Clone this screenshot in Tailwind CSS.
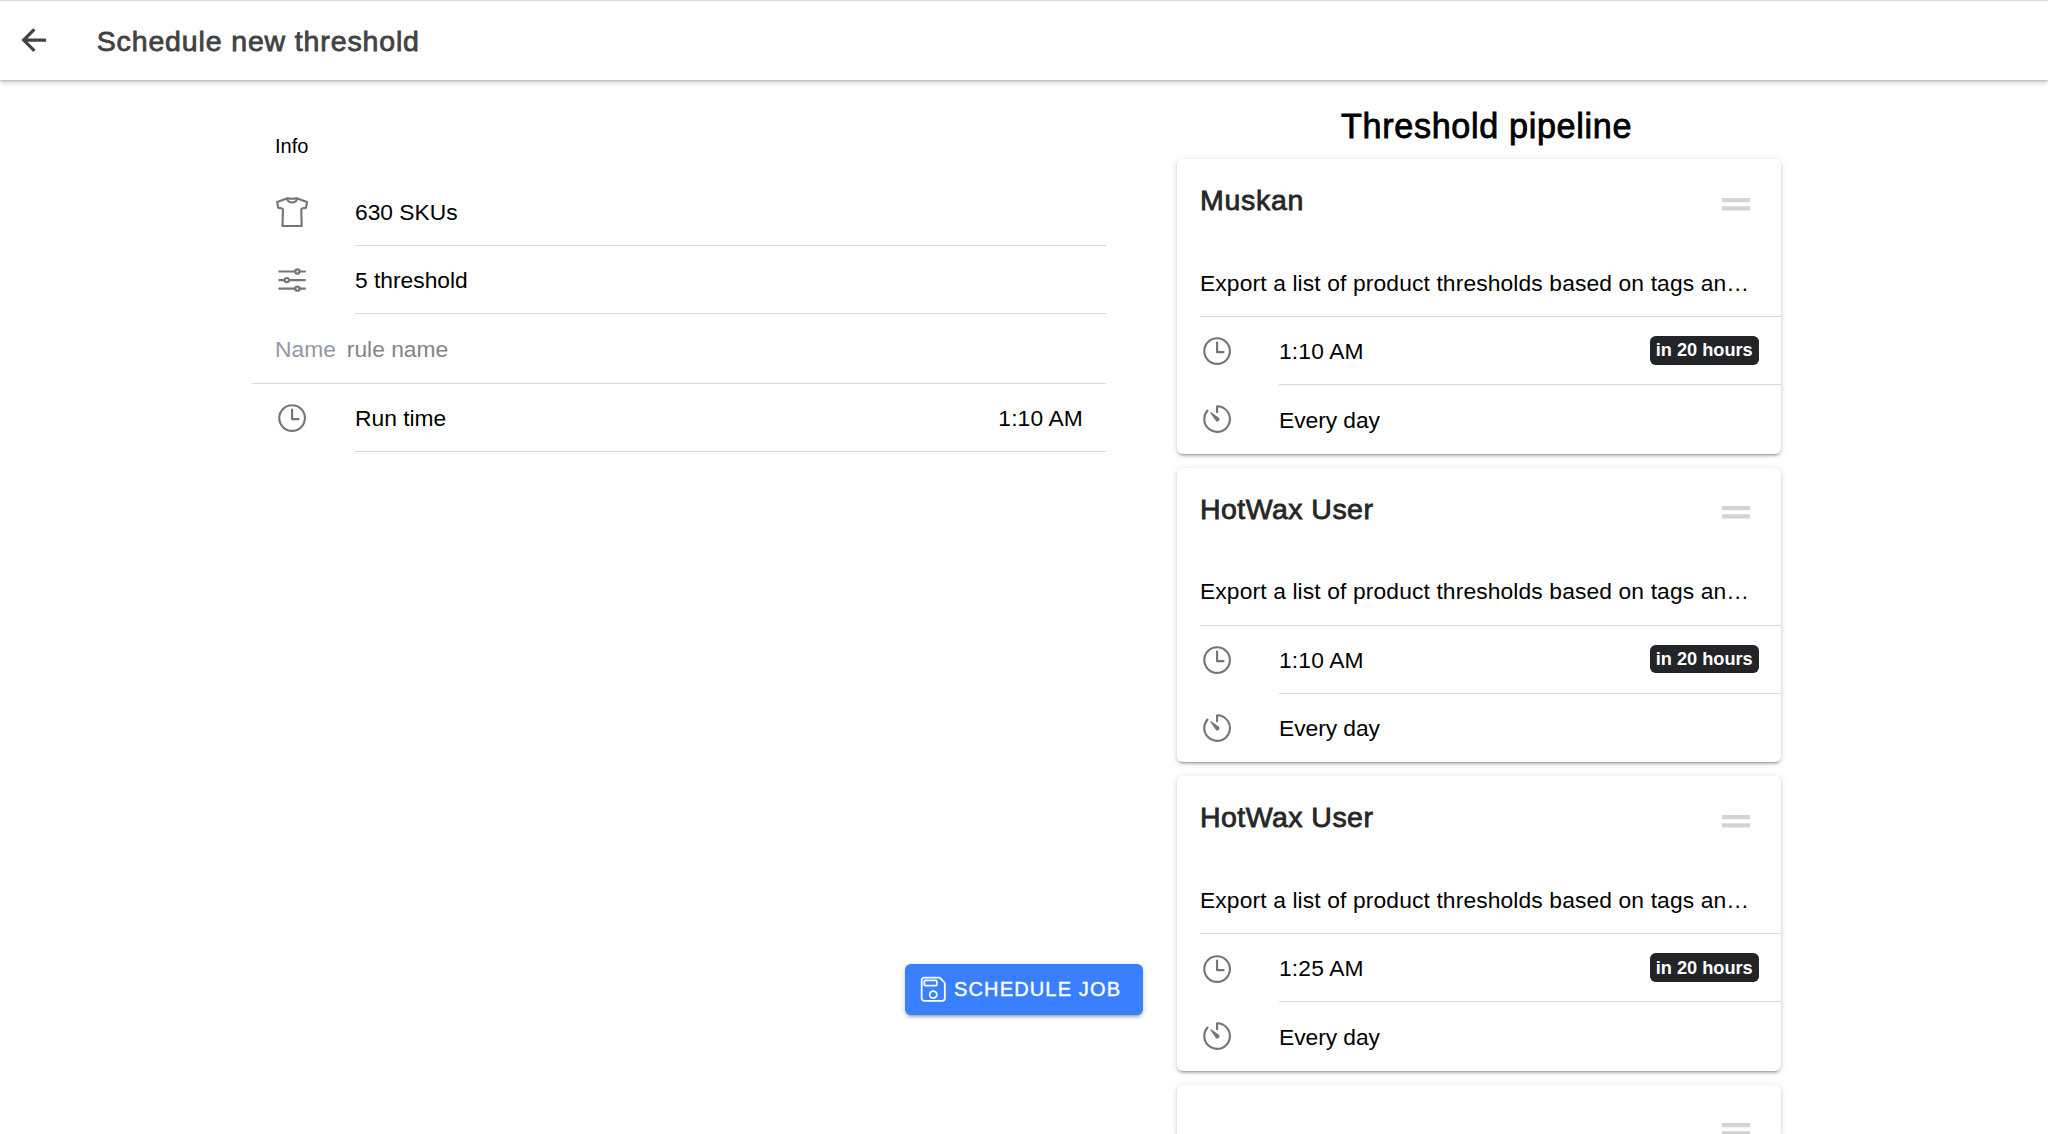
<!DOCTYPE html>
<html lang="en">
<head>
<meta charset="utf-8">
<title>Schedule new threshold</title>
<script src="https://cdn.jsdelivr.net/npm/@tailwindcss/browser@4"></script>
</head>
<body class="h-[1134px] w-[2048px] overflow-hidden bg-white font-['Liberation_Sans',Arial,sans-serif] text-[22.8px] leading-none text-black">
<svg class="hidden">
  <symbol id="time" viewBox="0 0 512 512"><path d="M256 64C150 64 64 150 64 256s86 192 192 192 192-86 192-192S362 64 256 64z" fill="none" stroke="currentColor" stroke-width="32"/><path d="M256 128v144h96" fill="none" stroke="currentColor" stroke-width="32" stroke-linecap="round" stroke-linejoin="round"/></symbol>
  <symbol id="timer" viewBox="0 0 512 512"><path d="M112.91 128A191.85 191.85 0 0064 254c-1.18 106.35 85.65 193.8 192 194 106.2.2 192-85.83 192-192 0-104.54-83.55-189.61-187.5-192a4.36 4.36 0 00-4.5 4.37V152" fill="none" stroke="currentColor" stroke-width="32" stroke-linecap="round" stroke-linejoin="round"/><path d="M233.38 278.63l-79-113a8.13 8.13 0 0111.32-11.32l113 79a32.5 32.5 0 01-37.25 53.26 33.21 33.21 0 01-8.07-7.94z" fill="currentColor"/></symbol>
  <symbol id="shirt" viewBox="0 0 512 512"><g fill="none" stroke="currentColor" stroke-width="32" stroke-linecap="round" stroke-linejoin="round"><path d="M314.56 48s-22.78 8-58.56 8-58.56-8-58.56-8a31.94 31.94 0 00-10.57 1.8L32 104l16.63 88 48.88 5.52a24 24 0 0121.29 24.58L112 464h288l-6.8-241.9a24 24 0 0121.29-24.58l48.88-5.52L480 104 325.13 49.8a31.94 31.94 0 00-10.57-1.8z"/><path d="M333.31 52.66a80 80 0 01-154.62 0"/></g></symbol>
  <symbol id="options" viewBox="0 0 512 512"><g fill="none" stroke="currentColor" stroke-width="32" stroke-linecap="round" stroke-linejoin="round"><path d="M368 128h80M64 128h240M368 384h80M64 384h240M208 256h240M64 256h80"/><circle cx="336" cy="128" r="32"/><circle cx="176" cy="256" r="32"/><circle cx="336" cy="384" r="32"/></g></symbol>
  <symbol id="save" viewBox="0 0 512 512"><path d="M380.93 57.37A32 32 0 00358.3 48H94.22A46.21 46.21 0 0048 94.22v323.56A46.21 46.21 0 0094.22 464h323.56A46.36 46.36 0 00464 417.78V153.7a32 32 0 00-9.37-22.63zM256 416a64 64 0 1164-64 63.92 63.92 0 01-64 64zm48-224H112a16 16 0 01-16-16v-64a16 16 0 0116-16h192a16 16 0 0116 16v64a16 16 0 01-16 16z" fill="none" stroke="currentColor" stroke-width="32" stroke-linecap="round" stroke-linejoin="round"/></symbol>
  <symbol id="back" viewBox="0 0 512 512"><path d="M244 400L100 256l144-144M120 256h292" fill="none" stroke="currentColor" stroke-width="48" stroke-linecap="square" stroke-miterlimit="10"/></symbol>
  <symbol id="reorder" viewBox="0 0 28 13"><path d="M0 0h28v4.2H0zM0 8.3h28v4.2H0z" fill="currentColor"/></symbol>
</svg>

<header class="flex h-[80px] items-center border-t border-[#d6d6d6] bg-white pl-[17px] text-[#424242] shadow-[0_3px_6px_rgba(0,0,0,0.14),0_1px_2px_rgba(0,0,0,0.22)]">
  <svg class="size-[34.2px]"><use href="#back"/></svg>
  <h1 class="ml-[45.5px] pt-px text-[28.5px] tracking-[0.86px] [-webkit-text-stroke:0.8px]">Schedule new threshold</h1>
</header>

<main class="flex">
  <section class="ml-[252px] flex h-[1054px] w-[854px] shrink-0 flex-col pt-[56px]">
    <h2 class="flex h-[41px] pl-[23px] text-[20px]">Info</h2>
    <div class="flex h-[69px] pl-[23px]">
      <div class="flex w-[80px] items-center pt-px text-[#757575]"><svg class="size-[34.2px]"><use href="#shirt"/></svg></div>
      <div class="flex flex-1 items-center border-b border-[#d9d9d9] pt-[2px]">630 SKUs</div>
    </div>
    <div class="flex h-[68px] pl-[23px]">
      <div class="flex w-[80px] items-center text-[#757575]"><svg class="size-[34.2px]"><use href="#options"/></svg></div>
      <div class="flex flex-1 items-center border-b border-[#d9d9d9] pt-[2px]">5 threshold</div>
    </div>
    <div class="flex h-[70px] items-center border-b border-[#d9d9d9] pt-[2px] pl-[23px]">
      <span class="text-[#9698a2]">Name</span><span class="ml-[11px] text-[#858585]">rule name</span>
    </div>
    <div class="flex h-[68px] pl-[23px]">
      <div class="flex w-[80px] items-center text-[#757575]"><svg class="size-[34.2px]"><use href="#time"/></svg></div>
      <div class="flex flex-1 items-center justify-between border-b border-[#d9d9d9] pt-[2px] pr-[23px]"><span>Run time</span><span class="tracking-[0.15px]">1:10 AM</span></div>
    </div>
  </section>

  <div class="flex h-[1054px] w-[71px] shrink-0 items-end justify-end">
    <button class="mr-[34px] mb-[119px] flex h-[51px] w-[238px] shrink-0 items-center rounded-[5.7px] bg-[#3880ff] pl-[14px] text-white shadow-[0_4px_2px_-3px_rgba(0,0,0,0.2),0_3px_3px_rgba(0,0,0,0.14),0_1px_7px_rgba(0,0,0,0.12)]">
      <svg class="size-[28.5px] shrink-0"><use href="#save"/></svg>
      <span class="ml-[6.5px] pb-[2px] text-[20px] tracking-[1.15px] whitespace-nowrap [-webkit-text-stroke:0.4px]">SCHEDULE JOB</span>
    </button>
  </div>

  <section class="h-[1054px] w-[604px] shrink-0 overflow-visible pt-[29px]">
    <h2 class="h-[50px] pl-[164px] text-[34.2px] tracking-[0.65px] [-webkit-text-stroke:0.8px]">Threshold pipeline</h2>
    <div id="pipeline" class="flex flex-col gap-[14px]"></div>
  </section>
</main>

<script>
  const shadow = "shadow-[0_4px_2px_-3px_rgba(0,0,0,0.22),0_2px_3px_rgba(0,0,0,0.16),0_1px_7px_rgba(0,0,0,0.12)]";
  const handle = `<svg class="mt-[38.7px] h-[13px] w-[28px] text-[#d3d3d3]"><use href="#reorder"/></svg>`;
  const jobs = [
    ["Muskan", "1:10 AM", "tracking-[0.7px]"],
    ["HotWax User", "1:10 AM", "tracking-[0.45px]"],
    ["HotWax User", "1:25 AM", "tracking-[0.45px]"],
  ];
  document.getElementById("pipeline").innerHTML = jobs.map(([name, time, tracking]) => `
    <article class="h-[294.6px] shrink-0 rounded-[5.7px] bg-white ${shadow}">
      <div class="flex h-[89px] items-start justify-between pl-[23px] pr-[31.5px]">
        <h3 class="${tracking} pt-[27px] text-[28.5px] text-[#262626] [-webkit-text-stroke:0.8px]">${name}</h3>
        ${handle}
      </div>
      <div class="ml-[23px] flex h-[69px] items-center border-b border-[#d9d9d9] pt-[2px] tracking-[0.13px] whitespace-nowrap">Export a list of product thresholds based on tags an…</div>
      <div class="flex h-[68px] pl-[23px]">
        <div class="flex w-[79px] items-center pt-px text-[#757575]"><svg class="size-[34.2px]"><use href="#time"/></svg></div>
        <div class="flex flex-1 items-center justify-between border-b border-[#d9d9d9] pr-[22.5px]">
          <span class="pt-[2px] tracking-[0.15px]">${time}</span>
          <span class="flex h-[28.6px] w-[108.6px] items-center justify-center rounded-[5.7px] bg-[#222428] text-[18.2px] font-bold whitespace-nowrap text-white">in 20 hours</span>
        </div>
      </div>
      <div class="flex h-[68.6px] items-center pl-[23px]">
        <div class="flex w-[79px] items-center text-[#757575]"><svg class="size-[34.2px]"><use href="#timer"/></svg></div>
        <span class="pt-[2px] tracking-[-0.05px]">Every day</span>
      </div>
    </article>`).join("") + `
    <article class="flex h-[50px] items-start justify-end overflow-hidden rounded-t-[5.7px] bg-white pr-[31.5px] ${shadow}">${handle}</article>`;
</script>
</body>
</html>
